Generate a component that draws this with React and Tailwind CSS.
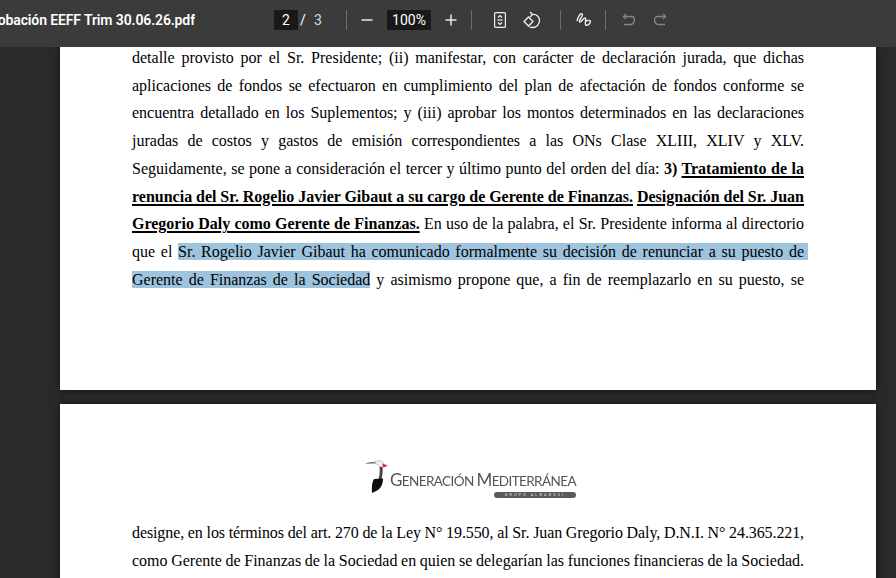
const underlined = "underline decoration-2 underline-offset-[2px]";

const firstPageLines = [
  { text: <>detalle provisto por el Sr. Presidente; (ii) manifestar, con carácter de declaración jurada, que dichas</> },
  { text: <>aplicaciones de fondos se efectuaron en cumplimiento del plan de afectación de fondos conforme se</> },
  { text: <>encuentra detallado en los Suplementos; y (iii) aprobar los montos determinados en las declaraciones</> },
  { text: <>juradas de costos y gastos de emisión correspondientes a las ONs Clase XLIII, XLIV y XLV.</> },
  { text: <>Seguidamente, se pone a consideración el tercer y último punto del orden del día: <b>3) <span className={underlined}>Tratamiento de la</span></b></> },
  {
    text: <b><span className={underlined}>renuncia del Sr. Rogelio Javier Gibaut a su cargo de Gerente de Finanzas.</span> <span className={underlined}>Designación del Sr. Juan</span></b>,
    tight: "[word-spacing:-0.3px]",
  },
  { text: <><b><span className={underlined}>Gregorio Daly como Gerente de Finanzas.</span></b> En uso de la palabra, el Sr. Presidente informa al directorio</> },
  { text: <>que el <span className="bg-[#9dc3de] shadow-[4px_0_0_#9dc3de]">Sr. Rogelio Javier Gibaut ha comunicado formalmente su decisión de renunciar a su puesto de</span></> },
  { text: <><span className="bg-[#9dc3de]">Gerente de Finanzas de la Sociedad</span> y asimismo propone que, a fin de reemplazarlo en su puesto, se</> },
];

const secondPageLines = [
  {
    text: <>designe, en los términos del art. 270 de la Ley N° 19.550, al Sr. Juan Gregorio Daly, D.N.I. N° 24.365.221,</>,
    tight: "tracking-[-0.1px] [word-spacing:-1px]",
  },
  {
    text: <>como Gerente de Finanzas de la Sociedad en quien se delegarían las funciones financieras de la Sociedad.</>,
    tight: "[word-spacing:-0.4px]",
  },
];

function TextLines({ lines }) {
  return (
    <div className="font-['Liberation_Serif',serif] text-[16px] leading-[27.7px] text-black">
      {lines.map((line, i) => (
        <p key={i} className={`whitespace-nowrap text-justify [text-align-last:justify] ${line.tight || ""}`}>
          {line.text}
        </p>
      ))}
    </div>
  );
}

function Divider() {
  return <div className="h-5 w-px bg-[#6b6b6b]" />;
}

function Logo() {
  return (
    <div className="flex h-[40px] items-start pl-[233px]">
      <svg width="25" height="36" viewBox="0 0 25 36" className="shrink-0 blur-[0.4px]">
        <path d="M0 4.500 C4 3.500 8 2.500 12 3 L12 4.500 C8 4.500 4 5 0 4.500Z" fill="#777" />
        <path d="M10 3 C13 1 17 1 18 4 L18.500 7 L15 8.500 C14 6 12 5 10 4.500Z" fill="#f2f2f2" stroke="#888" strokeWidth="0.5" />
        <path d="M17.500 4.500 L23 6.800 L18 8.500Z" fill="#e0202a" />
        <path d="M14.500 8 L17.500 8 C18 12 17.500 16 16.500 20 L13.500 20 C14.800 16 15 12 14.500 8Z" fill="#444" />
        <path d="M9 20 L18 19.500 C18 24 16.500 29 12 31.500 L7 34 C6.500 28 7 23 9 20Z" fill="#0c0c0c" />
      </svg>
      <div className="mt-[11px] flex flex-col items-end">
        <div className="whitespace-nowrap font-['Lato',sans-serif] text-[13.5px] leading-[20px] uppercase tracking-[-0.6px] text-[#555] blur-[0.3px]">
          <span className="text-[17px]">G</span>eneración <span className="text-[17px]">M</span>editerránea
        </div>
        <div className="mt-[1px] flex h-[6px] w-[82px] items-center justify-center rounded-full bg-[#5a5a5a] text-[4px] leading-none tracking-[2px] text-[#ddd] blur-[0.3px]">
          GRUPO ALBANESI
        </div>
      </div>
    </div>
  );
}

export default function App() {
  return (
    <div className="flex h-[578px] w-[896px] flex-col overflow-hidden bg-[#2a2a2a] font-['Roboto',sans-serif]">
      <header className="relative z-10 flex h-[47px] shrink-0 items-center bg-[#3b3b3b] pb-[7px] text-white">
        <div className="flex w-[195px] shrink-0 justify-end overflow-hidden whitespace-nowrap text-[14px] font-semibold tracking-[-0.12px]">
          Aprobación EEFF Trim 30.06.26.pdf
        </div>
        <div className="ml-[79px] flex h-5 w-[24px] items-center justify-center bg-[#191919] text-[14px]">2</div>
        <span className="w-[10px] text-center text-[14px]">/</span>
        <span className="ml-[4px] w-[12px] text-center text-[14px] text-[#dcdcdc]">3</span>
        <div className="ml-[22px]"><Divider /></div>
        <svg width="12" height="12" viewBox="0 0 12 12" className="ml-[14px]"><path d="M0.500 6h11" stroke="#e8e8e8" strokeWidth="1.5" /></svg>
        <div className="ml-[14px] flex h-5 w-[44px] items-center justify-center bg-[#191919] text-[14px]">100%</div>
        <svg width="12" height="12" viewBox="0 0 12 12" className="ml-[14px]"><path d="M0.500 6h11M6 0.500v11" stroke="#e8e8e8" strokeWidth="1.5" /></svg>
        <div className="ml-[14px]"><Divider /></div>
        <svg width="12" height="16" viewBox="0 0 12 16" fill="none" stroke="#f0f0f0" strokeWidth="1.2" className="ml-[22px]">
          <rect x="0.600" y="0.600" width="10.800" height="14.800" rx="1" />
          <path d="M4 5.500l2-2 2 2M4 10.500l2 2 2-2" />
          <path d="M3.500 8h5" />
        </svg>
        <svg width="18" height="18" viewBox="0 0 18 18" fill="none" stroke="#f0f0f0" strokeWidth="1.3" className="ml-[17px]">
          <path d="M7 1L9.500 3.500 7 6" />
          <path d="M9.500 3.500c4-.5 7 2.200 7 6s-3 7-7 7c-1 0-2-.2-3-.8" />
          <path d="M5.500 6L1 10.500 5.500 15 10 10.500Z" />
        </svg>
        <div className="ml-[19px]"><Divider /></div>
        <svg width="16" height="16" viewBox="0 0 16 16" fill="none" stroke="#f0f0f0" strokeWidth="1.4" className="ml-[15px]">
          <path d="M1 9C2 5 4 1 6 2C8 3 2 9 3.500 10C5 11 7 6 9 6C11 6 8 12 10 13C12 14 14.500 11 14.500 9.500C14.500 8 11 8 9.500 9.500" />
        </svg>
        <div className="ml-[13px]"><Divider /></div>
        <svg width="14" height="14" viewBox="0 0 14 14" fill="none" stroke="#858585" strokeWidth="1.3" className="ml-[16px]">
          <path d="M4 1L1.500 3.500 4 6" />
          <path d="M1.500 3.500H9c2 0 3.500 1.500 3.500 3.500S11 11.500 9 11.500H2" />
        </svg>
        <svg width="14" height="14" viewBox="0 0 14 14" fill="none" stroke="#858585" strokeWidth="1.3" className="ml-[17px]">
          <path d="M10 1L12.500 3.500 10 6" />
          <path d="M12.500 3.500H5C3 3.500 1.500 5 1.500 7S3 11.500 5 11.500h7" />
        </svg>
      </header>

      <main className="flex flex-col gap-[14px]">
        <section className="ml-[60px] flex h-[343px] w-[816px] shrink-0 flex-col bg-white px-[72px] shadow-[0_0_8px_rgba(0,0,0,0.6)]">
          <div className="mt-[-3px]">
            <TextLines lines={firstPageLines} />
          </div>
        </section>
        <section className="ml-[60px] h-[400px] w-[816px] shrink-0 bg-white px-[72px] pt-[55px] shadow-[0_0_8px_rgba(0,0,0,0.6)]">
          <Logo />
          <div className="mt-[20px]">
            <TextLines lines={secondPageLines} />
          </div>
        </section>
      </main>
    </div>
  );
}
